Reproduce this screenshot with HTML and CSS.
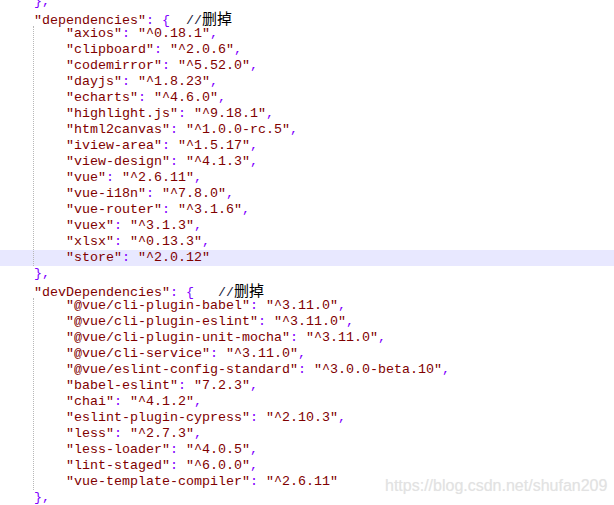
FILE: index.html
```html
<!DOCTYPE html>
<html>
<head>
<meta charset="utf-8">
<link rel="stylesheet" href="styles.css">
</head>
<body>
<div class="editor">
  <div class="line"><span class="op">},</span></div>
  <div class="line"><span class="str">"dependencies"</span><span class="op">: {</span>  <span class="cmt">//<span class="cjk">删掉</span></span></div>
  <div class="block">
    <div class="line"><span class="str">"axios"</span><span class="op">: </span><span class="str">"^0.18.1"</span><span class="op">,</span></div>
    <div class="line"><span class="str">"clipboard"</span><span class="op">: </span><span class="str">"^2.0.6"</span><span class="op">,</span></div>
    <div class="line"><span class="str">"codemirror"</span><span class="op">: </span><span class="str">"^5.52.0"</span><span class="op">,</span></div>
    <div class="line"><span class="str">"dayjs"</span><span class="op">: </span><span class="str">"^1.8.23"</span><span class="op">,</span></div>
    <div class="line"><span class="str">"echarts"</span><span class="op">: </span><span class="str">"^4.6.0"</span><span class="op">,</span></div>
    <div class="line"><span class="str">"highlight.js"</span><span class="op">: </span><span class="str">"^9.18.1"</span><span class="op">,</span></div>
    <div class="line"><span class="str">"html2canvas"</span><span class="op">: </span><span class="str">"^1.0.0-rc.5"</span><span class="op">,</span></div>
    <div class="line"><span class="str">"iview-area"</span><span class="op">: </span><span class="str">"^1.5.17"</span><span class="op">,</span></div>
    <div class="line"><span class="str">"view-design"</span><span class="op">: </span><span class="str">"^4.1.3"</span><span class="op">,</span></div>
    <div class="line"><span class="str">"vue"</span><span class="op">: </span><span class="str">"^2.6.11"</span><span class="op">,</span></div>
    <div class="line"><span class="str">"vue-i18n"</span><span class="op">: </span><span class="str">"^7.8.0"</span><span class="op">,</span></div>
    <div class="line"><span class="str">"vue-router"</span><span class="op">: </span><span class="str">"^3.1.6"</span><span class="op">,</span></div>
    <div class="line"><span class="str">"vuex"</span><span class="op">: </span><span class="str">"^3.1.3"</span><span class="op">,</span></div>
    <div class="line"><span class="str">"xlsx"</span><span class="op">: </span><span class="str">"^0.13.3"</span><span class="op">,</span></div>
    <div class="line current"><span class="str">"store"</span><span class="op">: </span><span class="str">"^2.0.12"</span></div>
  </div>
  <div class="line"><span class="op">},</span></div>
  <div class="line"><span class="str">"devDependencies"</span><span class="op">: {</span>   <span class="cmt">//<span class="cjk">删掉</span></span></div>
  <div class="block">
    <div class="line"><span class="str">"@vue/cli-plugin-babel"</span><span class="op">: </span><span class="str">"^3.11.0"</span><span class="op">,</span></div>
    <div class="line"><span class="str">"@vue/cli-plugin-eslint"</span><span class="op">: </span><span class="str">"^3.11.0"</span><span class="op">,</span></div>
    <div class="line"><span class="str">"@vue/cli-plugin-unit-mocha"</span><span class="op">: </span><span class="str">"^3.11.0"</span><span class="op">,</span></div>
    <div class="line"><span class="str">"@vue/cli-service"</span><span class="op">: </span><span class="str">"^3.11.0"</span><span class="op">,</span></div>
    <div class="line"><span class="str">"@vue/eslint-config-standard"</span><span class="op">: </span><span class="str">"^3.0.0-beta.10"</span><span class="op">,</span></div>
    <div class="line"><span class="str">"babel-eslint"</span><span class="op">: </span><span class="str">"7.2.3"</span><span class="op">,</span></div>
    <div class="line"><span class="str">"chai"</span><span class="op">: </span><span class="str">"^4.1.2"</span><span class="op">,</span></div>
    <div class="line"><span class="str">"eslint-plugin-cypress"</span><span class="op">: </span><span class="str">"^2.10.3"</span><span class="op">,</span></div>
    <div class="line"><span class="str">"less"</span><span class="op">: </span><span class="str">"^2.7.3"</span><span class="op">,</span></div>
    <div class="line"><span class="str">"less-loader"</span><span class="op">: </span><span class="str">"^4.0.5"</span><span class="op">,</span></div>
    <div class="line"><span class="str">"lint-staged"</span><span class="op">: </span><span class="str">"^6.0.0"</span><span class="op">,</span></div>
    <div class="line"><span class="str">"vue-template-compiler"</span><span class="op">: </span><span class="str">"^2.6.11"</span></div>
  </div>
  <div class="line"><span class="op">},</span></div>
</div>
<div class="watermark">https://blog.csdn.net/shufan209</div>
</body>
</html>
```

FILE: styles.css
```css
html, body {
  margin: 0;
  padding: 0;
  background: #ffffff;
  overflow: hidden;
}
body {
  width: 614px;
  height: 505px;
  position: relative;
}
.editor {
  margin-top: -6px;
  font-family: "Liberation Mono", "Courier New", monospace;
  font-size: 13.33px;
  line-height: 16px;
  color: #000000;
}
.line {
  height: 16px;
  padding-left: 34px;
  white-space: pre;
}
.block {
  position: relative;
}
.block::before {
  content: "";
  position: absolute;
  left: 33px;
  top: 0;
  bottom: 0;
  border-left: 1px dotted #b8b8b8;
}
.block .line {
  padding-left: 66px;
}
.current {
  background: #e8e8ff;
}
.str {
  color: #800000;
}
.op {
  color: #8000ff;
}
.cmt {
  color: #1a1a40;
}
.cjk {
  font-family: "Noto Sans CJK SC", sans-serif;
  font-size: 15px;
  line-height: 16px;
  color: #000000;
}
.watermark {
  position: absolute;
  left: 385px;
  top: 477px;
  font-family: "Liberation Sans", Arial, sans-serif;
  font-size: 16px;
  color: #e2e2e2;
  text-shadow: 0 0 1px #f0f0f0;
}
```
